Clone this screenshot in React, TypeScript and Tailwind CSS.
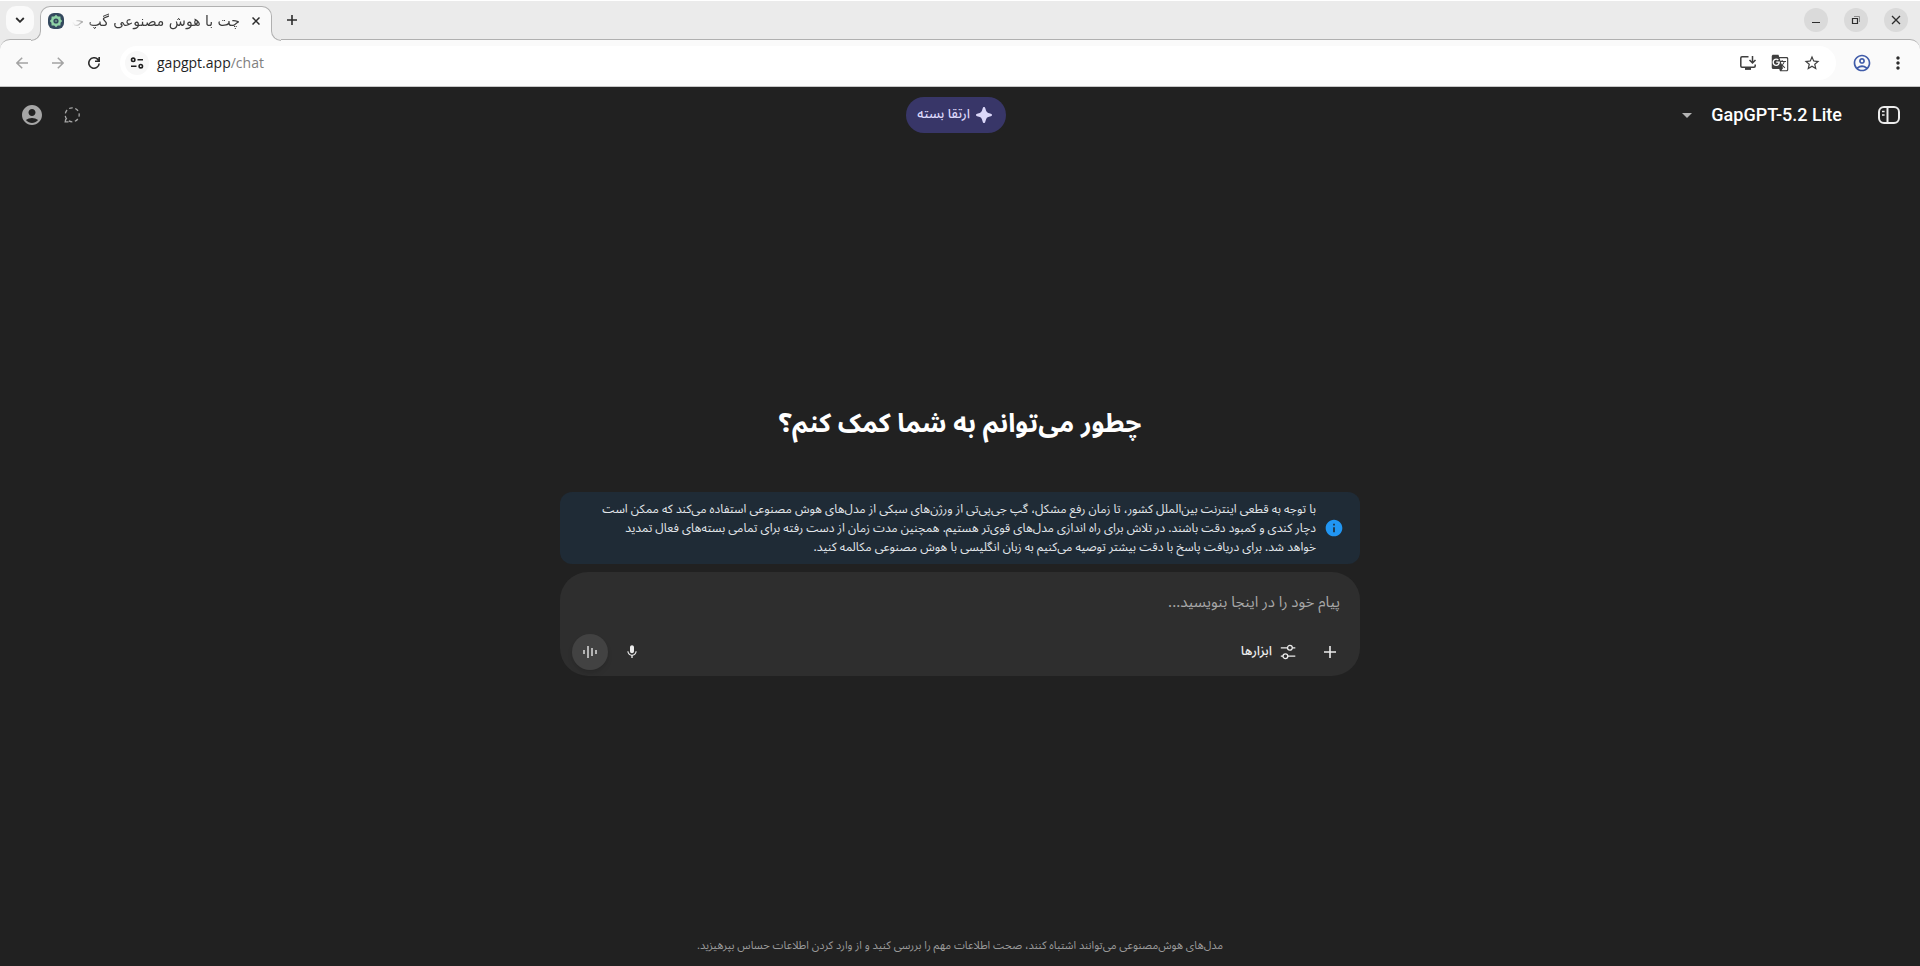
import React, { useState } from 'react';
import {
  MdAccountCircle,
  MdArrowDropDown,
  MdGTranslate,
  MdInfo,
  MdMic,
  MdMoreVert,
  MdOutlineAccountCircle,
  MdStarBorder,
} from 'react-icons/md';

const FaviconIcon: React.FC = () => (
  <svg viewBox="0 0 16 16" className="w-4 h-4 shrink-0" aria-hidden="true">
    <rect width="16" height="16" rx="6" fill="#34495e" />
    <path
      d="M8 1.8 9.8 3.4 12.4 3.6 12.6 6.2 14.2 8 12.6 9.8 12.4 12.4 9.8 12.6 8 14.2 6.2 12.6 3.6 12.4 3.4 9.8 1.8 8 3.4 6.2 3.6 3.6 6.2 3.4Z"
      fill="#8fd3a5"
    />
    <circle cx="8" cy="8" r="2.6" fill="#34495e" />
    <circle cx="8" cy="8" r=".8" fill="#8fd3a5" />
  </svg>
);

const SiteInfoIcon: React.FC = () => (
  <svg viewBox="0 0 16 16" className="w-4 h-4" fill="none" stroke="#1f1f1f" strokeWidth="1.6" aria-hidden="true">
    <circle cx="4.2" cy="4.8" r="1.7" />
    <path d="M8.5 4.8H14M2 11.2h5.5" />
    <circle cx="11.8" cy="11.2" r="1.7" />
  </svg>
);

const InstallIcon: React.FC = () => (
  <svg viewBox="-1 -1 18 18" className="w-[18px] h-[18px]" fill="none" stroke="currentColor" strokeWidth="1.5" aria-hidden="true">
    <path d="M8.5 1.8H2A1.2 1.2 0 0 0 .8 3v8A1.2 1.2 0 0 0 2 12.2h12a1.2 1.2 0 0 0 1.2-1.2V9.5" />
    <path d="M12.5 1v6.500M9.5 5l3 3 3-3" />
    <path d="M5 13.8h6" strokeWidth="2.2" />
  </svg>
);

const DashedChatIcon: React.FC = () => (
  <svg viewBox="0 0 16 16" className="w-4 h-4" fill="none" stroke="currentColor" strokeWidth="1.3" aria-hidden="true">
    <circle cx="8.2" cy="7.8" r="7" strokeDasharray="3.7 2.584" strokeDashoffset="1.8" />
    <path d="M1.8 12 1.200 14.800H4.500" />
  </svg>
);

const SidebarIcon: React.FC = () => (
  <svg viewBox="0 0 22 18" className="w-[22px] h-[18px]" fill="none" stroke="currentColor" strokeWidth="2" aria-hidden="true">
    <rect x="1" y="1" width="20" height="16" rx="5" />
    <path d="M9.5 1v16" />
    <path d="M4 5.5h2.6M4 9h2.6" strokeWidth="1.6" />
  </svg>
);

const SparkleIcon: React.FC = () => (
  <svg viewBox="0 0 16 16" className="w-4 h-4" fill="currentColor" aria-hidden="true">
    <path d="M8 0c.7 0 1 .5 1.2 1.1l.9 2.7a3.4 3.4 0 0 0 2.1 2.1l2.7.9c.6.2 1.1.5 1.1 1.2s-.5 1-1.1 1.2l-2.7.9a3.4 3.4 0 0 0-2.1 2.1l-.9 2.7C9 15.5 8.700 16 8 16s-1-.5-1.200-1.100l-.9-2.700a3.400 3.400 0 0 0-2.100-2.100l-2.700-.9C.5 9 0 8.700 0 8s.5-1 1.100-1.200l2.700-.9a3.400 3.400 0 0 0 2.100-2.100l.9-2.700C7 .5 7.300 0 8 0Z" />
  </svg>
);

const ToolsIcon: React.FC = () => (
  <svg viewBox="0 0 16 16" className="w-4 h-4" fill="none" stroke="currentColor" strokeWidth="1.3" aria-hidden="true">
    <path d="M.8 3.8h6.7M12.3 3.8h3M.8 12.2h2.2M7.8 12.2h7.5" />
    <circle cx="9.9" cy="3.8" r="2.4" />
    <circle cx="5.4" cy="12.2" r="2.4" />
  </svg>
);

const VoiceIcon: React.FC = () => (
  <svg viewBox="0 0 16 14" className="w-4 h-[14px]" fill="none" stroke="currentColor" strokeWidth="1.7" aria-hidden="true">
    <path d="M2 5v4M6 1v12M10 3v8M14 5v4" />
  </svg>
);

const BrowserTabs: React.FC = () => (
  <div className="flex h-10 items-end justify-between border-t border-white pl-1.5 pr-3">
    <div className="flex items-end">
      <button aria-label="Search tabs" className="mb-1.5 flex h-7 w-7 items-center justify-center rounded-[10px] bg-[#fafafa]">
        <svg viewBox="0 0 10 6" className="h-1.5 w-2.5" fill="none" stroke="#2c2c2c" strokeWidth="1.8">
          <path d="m1.2 1 3.8 3.8L8.8 1" />
        </svg>
      </button>

      <div className="relative z-10 ml-1.5 -mb-px flex h-[35px] w-[232px] items-center gap-2 rounded-t-[10px] border border-b-0 border-[#b0b0b0] bg-[#fafafa] px-[7px] pb-1.5">
        <span className="absolute -left-2.5 bottom-0 h-2.5 w-2.5 bg-[#fafafa]">
          <span className="block h-full w-full rounded-br-[10px] border-r border-b border-[#b0b0b0] bg-[#ebebeb]" />
        </span>
        <FaviconIcon />
        <span
          dir="rtl"
          className="min-w-0 flex-1 overflow-hidden whitespace-nowrap text-sm text-[#3c3c3c] [mask-image:linear-gradient(to_right,transparent,black_24px)]"
        >
          چت با هوش مصنوعی گپ جی‌پی‌تی
        </span>
        <button aria-label="Close tab" className="flex h-4 w-4 items-center justify-center">
          <svg viewBox="0 0 8 8" className="h-2 w-2" fill="none" stroke="#2c2c2c" strokeWidth="1.5">
            <path d="m.5.5 7 7M7.5.5l-7 7" />
          </svg>
        </button>
        <span className="absolute -right-2.5 bottom-0 h-2.5 w-2.5 bg-[#fafafa]">
          <span className="block h-full w-full rounded-bl-[10px] border-b border-l border-[#b0b0b0] bg-[#ebebeb]" />
        </span>
      </div>

      <button aria-label="New tab" className="mb-1.5 ml-1.5 flex h-7 w-7 items-center justify-center">
        <svg viewBox="0 0 10 10" className="h-2.5 w-2.5" fill="none" stroke="#2c2c2c" strokeWidth="1.6">
          <path d="M5 0v10M0 5h10" />
        </svg>
      </button>
    </div>

    <div className="mb-2 flex gap-4">
      <button aria-label="Minimize" className="flex h-6 w-6 items-center justify-center rounded-full bg-[#dadada]">
        <svg viewBox="0 0 10 10" className="h-2.5 w-2.5" stroke="#2c2c2c">
          <path d="M1 7.5h8" />
        </svg>
      </button>
      <button aria-label="Restore" className="flex h-6 w-6 items-center justify-center rounded-full bg-[#dadada]">
        <svg viewBox="0 0 10 10" className="h-2.5 w-2.5" fill="none" stroke="#2c2c2c">
          <path d="M1.5 3.5h5v5h-5z" strokeWidth="1.2" />
          <path d="M3 1.5h5.5V7" stroke="#8a8a8a" />
        </svg>
      </button>
      <button aria-label="Close" className="flex h-6 w-6 items-center justify-center rounded-full bg-[#dadada]">
        <svg viewBox="0 0 10 10" className="h-2.5 w-2.5" stroke="#2c2c2c" strokeWidth="1.3">
          <path d="m1 1 8 8M9 1 1 9" />
        </svg>
      </button>
    </div>
  </div>
);

const BrowserToolbar: React.FC = () => (
  <div className="-mt-px flex h-12 items-center rounded-t-[10px] border-t border-b border-t-[#b0b0b0] border-b-[#c4c4c4] bg-[#fafafa] px-3">
    <div className="flex gap-4">
      <button aria-label="Back" className="flex h-5 w-5 items-center justify-center text-[#a3a3a3]">
        <svg viewBox="0 0 12 12" className="h-3 w-3" fill="none" stroke="currentColor" strokeWidth="1.5">
          <path d="M12 6H1M6.2.7.9 6l5.3 5.3" />
        </svg>
      </button>
      <button aria-label="Forward" className="flex h-5 w-5 items-center justify-center text-[#a3a3a3]">
        <svg viewBox="0 0 12 12" className="h-3 w-3" fill="none" stroke="currentColor" strokeWidth="1.5">
          <path d="M0 6h11M5.8.7 11.1 6l-5.3 5.3" />
        </svg>
      </button>
      <button aria-label="Reload" className="flex h-5 w-5 items-center justify-center text-[#2c2c2c]">
        <svg viewBox="0 0 12 12" className="h-3 w-3" fill="none" stroke="currentColor" strokeWidth="1.6">
          <path d="M11.2 6.5A5.2 5.2 0 1 1 9.8 2.4L11 3.8M11.2 0v4.3H7" />
        </svg>
      </button>
    </div>

    <div className="ml-4 flex h-[34px] flex-1 items-center rounded-full bg-white pl-[5px] pr-[15px]">
      <button aria-label="Site information" className="flex h-6 w-6 items-center justify-center rounded-full bg-[#f8f8f8]">
        <SiteInfoIcon />
      </button>
      <span className="ml-2 flex-1 font-['Open_Sans',sans-serif] text-sm text-[#1f1f1f]">
        gapgpt.app<span className="text-[#808080]">/chat</span>
      </span>
      <div className="flex gap-3.5 text-[#3f3f3f]">
        <button aria-label="Install app"><InstallIcon /></button>
        <button aria-label="Translate"><MdGTranslate className="h-[18px] w-[18px]" /></button>
        <button aria-label="Bookmark"><MdStarBorder className="h-[18px] w-[18px]" /></button>
      </div>
    </div>

    <div className="ml-4 flex gap-4">
      <button aria-label="Profile" className="text-[#3f5ba9]"><MdOutlineAccountCircle className="h-5 w-5" /></button>
      <button aria-label="Browser menu" className="text-[#2c2c2c]"><MdMoreVert className="h-5 w-5" /></button>
    </div>
  </div>
);

const ChatHeader: React.FC = () => (
  <header className="grid h-14 grid-cols-3 items-center pl-3 pr-5">
    <div className="flex items-center gap-9">
      <button aria-label="نوار کناری" className="text-[#ececec]"><SidebarIcon /></button>
      <button className="flex items-center gap-3 text-white">
        <span dir="ltr" className="font-[Roboto,sans-serif] text-lg font-medium">GapGPT-5.2 Lite</span>
        <MdArrowDropDown className="h-6 w-6 text-[#b4b4b4]" />
      </button>
    </div>

    <button className="flex h-9 w-[100px] items-center gap-1.5 justify-self-center rounded-full bg-[#383668] pr-3.5 text-[13px] font-medium whitespace-nowrap text-[#dcd8fa]">
      <SparkleIcon />
      ارتقا بسته
    </button>

    <div className="flex items-center justify-end text-[#a6a6a6]">
      <button aria-label="گفتگوی موقت" className="flex h-10 w-10 items-center justify-center"><DashedChatIcon /></button>
      <button aria-label="حساب کاربری" className="flex h-10 w-10 items-center justify-center"><MdAccountCircle className="h-6 w-6" /></button>
    </div>
  </header>
);

const Notice: React.FC = () => (
  <div role="status" className="flex min-h-[72px] items-center gap-2 rounded-xl bg-[#1f2b36] px-4 text-[#e2e6ea]">
    <MdInfo className="h-5 w-5 shrink-0 text-[#2196f3]" />
    <p className="pt-px text-xs leading-[19px]">
      با توجه به قطعی اینترنت بین‌الملل کشور، تا زمان رفع مشکل، گپ جی‌پی‌تی از ورژن‌های سبکی از مدل‌های هوش مصنوعی استفاده می‌کند که ممکن است
      <br />
      دچار کندی و کمبود دقت باشند. در تلاش برای راه اندازی مدل‌های قوی‌تر هستیم. همچنین مدت زمان از دست رفته برای تمامی بسته‌های فعال تمدید
      <br />
      خواهد شد. برای دریافت پاسخ با دقت بیشتر توصیه می‌کنیم به زبان انگلیسی با هوش مصنوعی مکالمه کنید.
    </p>
  </div>
);

const Composer: React.FC = () => {
  const [message, setMessage] = useState('');

  return (
    <form onSubmit={(e) => e.preventDefault()} className="mt-2 rounded-[28px] bg-[#2e2e2e] px-3 pt-4 pb-1.5">
      <input
        type="text"
        aria-label="پیام"
        value={message}
        onChange={(e) => setMessage(e.target.value)}
        placeholder="پیام خود را در اینجا بنویسید..."
        className="block h-7 w-full bg-transparent px-2 text-[15px] text-white outline-none placeholder:text-[#a8a8a8]"
      />
      <div className="mt-[18px] flex h-9 items-center justify-between text-[#ececec]">
        <div className="flex items-center gap-4">
          <button type="button" aria-label="افزودن" className="flex h-9 w-9 items-center justify-center">
            <svg viewBox="0 0 12 12" className="h-3 w-3" stroke="currentColor" strokeWidth="1.6">
              <path d="M6 0v12M0 6h12" />
            </svg>
          </button>
          <button type="button" className="flex items-center gap-2 text-[13px] font-medium">
            <ToolsIcon />
            ابزارها
          </button>
        </div>
        <div className="flex items-center gap-4">
          <button type="button" aria-label="ضبط صدا"><MdMic className="h-4 w-4" /></button>
          <button type="button" aria-label="گفتگوی صوتی" className="flex h-9 w-9 items-center justify-center rounded-full bg-[#424242] text-[#c8c8c8] shadow-md">
            <VoiceIcon />
          </button>
        </div>
      </div>
    </form>
  );
};

const App: React.FC = () => {
  return (
    <div className="flex min-h-screen flex-col bg-[#ebebeb] font-['DejaVu_Sans',sans-serif]">
      <BrowserTabs />
      <BrowserToolbar />

      <div dir="rtl" className="flex flex-1 flex-col bg-[#212121] font-['Noto_Sans_Arabic',sans-serif]">
        <ChatHeader />
        <main className="flex flex-1 flex-col items-center justify-center px-4">
          <h1 className="mb-12 text-[26px] leading-10 font-bold text-white">چطور می‌توانم به شما کمک کنم؟</h1>
          <div className="w-full max-w-[800px]">
            <Notice />
            <Composer />
          </div>
        </main>
        <footer className="pb-2.5 text-center text-[11px] leading-5 text-[#9a9a9a]">
          مدل‌های هوش‌مصنوعی می‌توانند اشتباه کنند، صحت اطلاعات مهم را بررسی کنید و از وارد کردن اطلاعات حساس بپرهیزید.
        </footer>
      </div>
    </div>
  );
};

export default App;
